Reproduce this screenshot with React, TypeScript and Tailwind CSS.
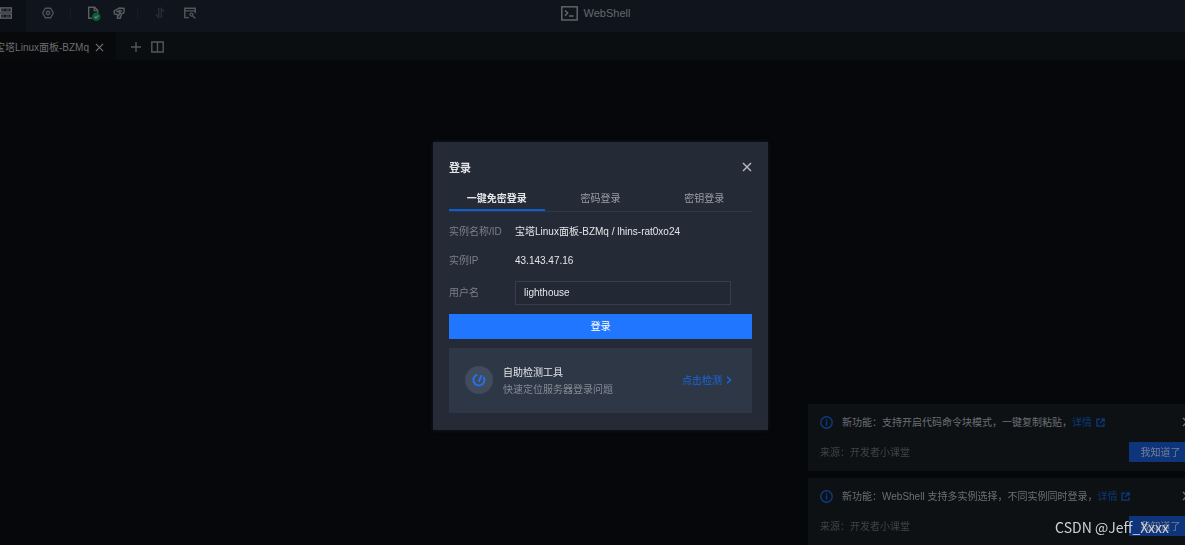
import React, { ReactNode, useState } from "react";

const stroke = { fill: "none", stroke: "currentColor", strokeWidth: 1.4 };

function CloseIcon({ className }: { className: string }) {
  return (
    <svg viewBox="0 0 10 10" className={className} {...stroke}>
      <path d="M1 1l8 8M9 1L1 9" />
    </svg>
  );
}

function ServerIcon() {
  return (
    <svg viewBox="0 0 12 12" className="size-3 text-[#606267]" {...stroke}>
      <rect x="0.7" y="0.9" width="10.6" height="4.1" />
      <rect x="0.7" y="7" width="10.6" height="4.1" />
      <path d="M2.3 2.95h2M5.8 2.95h3.6M2.3 9.05h2M5.8 9.05h3.6" strokeWidth="0.9" />
    </svg>
  );
}

function SettingsIcon() {
  return (
    <svg viewBox="0 0 12 12" className="size-3 text-[#4e5156]" {...stroke}>
      <path d="M3.4 1.2h5.2L11.4 6l-2.8 4.8H3.4L.6 6z" />
      <circle cx="6" cy="6" r="1.7" />
    </svg>
  );
}

function FileCheckIcon() {
  return (
    <svg viewBox="0 0 14 15" className="h-[15px] w-3.5 text-[#5b5d62]" {...stroke}>
      <path d="M5 12.3H1.7V1.2h6l3 3V7M7.2 1.2v3.4h3.5" />
      <circle cx="9.3" cy="10.7" r="4.2" fill="#075c39" stroke="none" />
      <path d="M7.5 10.6l1.4 1.4 2.3-2.5" stroke="#7c8f86" strokeWidth="1.1" />
    </svg>
  );
}

function RocketIcon() {
  return (
    <svg viewBox="0 0 12 12" className="size-3 text-[#5a5c61]" {...stroke}>
      <path d="M1 4.2L6.3 1l4.9.5-.4 4.3-2.4 1.4-1.2 4L4.3 11l.6-3.2L1.5 7z" />
      <path d="M3.4 5.2l3.6-1.9 2 1.2M5.6 9.4l1-4.2 1.6 1.6" />
    </svg>
  );
}

function TransferIcon() {
  return (
    <svg viewBox="0 0 12 12" className="size-3 text-[#292d33]" {...stroke}>
      <path d="M4.7 1v9.4L1.6 7.2M7.3 11V1.6l3.1 3.2" />
    </svg>
  );
}

function WindowSearchIcon() {
  return (
    <svg viewBox="0 0 12 12" className="size-3 text-[#54565b]" {...stroke}>
      <path d="M5 10.6H.8V1.2h10.4v5M.8 3.9h10.4" />
      <circle cx="7.4" cy="7.6" r="1.5" strokeWidth="1.2" />
      <path d="M8.5 8.7l2.9 2.7" />
    </svg>
  );
}

function TerminalIcon() {
  return (
    <svg viewBox="0 0 17 15" className="h-[15px] w-[17px]" {...stroke}>
      <rect x="0.8" y="0.8" width="15.4" height="13.2" />
      <path d="M4 4.5l2.7 2.6L4 9.7M8 10h4.5" />
    </svg>
  );
}

function InfoIcon() {
  return (
    <svg viewBox="0 0 13 13" className="size-[13px] shrink-0 text-[#0e3c84]" {...stroke}>
      <circle cx="6.5" cy="6.5" r="5.7" />
      <path d="M6.5 5.6v4M6.5 3.2v1.5" />
    </svg>
  );
}

function ExternalIcon() {
  return (
    <svg viewBox="0 0 9 9" className="size-[9px]" {...stroke}>
      <path d="M4 1.2H1v6.9h6.9V5.2M5.3.9h2.9v2.9M8 1L4 5" />
    </svg>
  );
}

function ToolButton({ label, children }: { label: string; children: ReactNode }) {
  return (
    <button type="button" aria-label={label} className="flex items-center justify-center">
      {children}
    </button>
  );
}

function Toolbar() {
  return (
    <header className="grid h-8 grid-cols-[1fr_auto_1fr] bg-[#10141d]">
      <div className="flex items-center">
        <div className="flex h-full w-[26px] items-center bg-[#0c0f16] pb-1.5">
          <ToolButton label="服务器"><ServerIcon /></ToolButton>
        </div>
        <div className="flex items-center pb-1.5 pl-4">
          <ToolButton label="设置"><SettingsIcon /></ToolButton>
          <span className="mx-4 h-3 w-px bg-[#171b22]" />
          <ToolButton label="文件"><FileCheckIcon /></ToolButton>
          <span className="w-3" />
          <ToolButton label="命令"><RocketIcon /></ToolButton>
          <span className="ml-3 mr-4 h-3 w-px bg-[#171b22]" />
          <ToolButton label="传输"><TransferIcon /></ToolButton>
          <span className="w-[18px]" />
          <ToolButton label="查找"><WindowSearchIcon /></ToolButton>
        </div>
      </div>
      <div className="flex items-center gap-1.5 pb-1.5 pl-1.5 text-[11px] text-[#66686d]">
        <TerminalIcon />
        <span>WebShell</span>
      </div>
      <div />
    </header>
  );
}

function TabBar() {
  return (
    <nav className="flex h-7 items-center bg-[#0a0e11] text-[#54565b]">
      <div className="flex h-full w-[116px] items-center justify-end gap-1.5 overflow-hidden bg-[#07090b] pr-3 pt-0.5 text-[10px] text-[#6c6e71]">
        <span className="whitespace-nowrap">宝塔Linux面板-BZMq</span>
        <button type="button" aria-label="关闭标签">
          <CloseIcon className="size-[9px]" />
        </button>
      </div>
      <button type="button" aria-label="新建标签" className="ml-[15px] pt-0.5">
        <svg viewBox="0 0 10 10" className="size-2.5" {...stroke}>
          <path d="M5 0v10M0 5h10" />
        </svg>
      </button>
      <button type="button" aria-label="分屏" className="ml-2.5 pt-0.5">
        <svg viewBox="0 0 13 12" className="h-3 w-[13px]" {...stroke}>
          <path d="M.8 1h11.4v10H.8zM6.5 1v10" />
        </svg>
      </button>
    </nav>
  );
}

const tabs = ["一键免密登录", "密码登录", "密钥登录"];

function LoginDialog() {
  const [active, setActive] = useState(0);
  const [user, setUser] = useState("lighthouse");
  return (
    <div className="fixed inset-0 flex items-center justify-center pl-4 pt-[26px]">
      <section
        role="dialog"
        aria-labelledby="login-title"
        className="w-[335px] bg-[#242a36] px-4 pb-[17px] pt-4 text-[10px] text-[#e4e6ea] shadow-[0_0_4px_#151922]"
      >
        <div className="flex items-start justify-between">
          <h1 id="login-title" className="text-[11px] leading-[21px] font-bold">登录</h1>
          <button type="button" aria-label="关闭" className="pt-1 text-[#b9bcc2]">
            <CloseIcon className="size-2.5" />
          </button>
        </div>

        <div role="tablist" className="mt-[7px] grid h-[26px] grid-cols-3 gap-2 border-b border-[#303744]">
          {tabs.map((tab, i) => (
            <button
              key={tab}
              type="button"
              role="tab"
              aria-selected={i === active}
              onClick={() => setActive(i)}
              className={
                i === active
                  ? "border-b-2 border-[#0d5fd0] pt-0.5 font-bold text-[#e4e6ea]"
                  : "border-b-2 border-transparent pt-0.5 text-[#9a9ea6]"
              }
            >
              {tab}
            </button>
          ))}
        </div>

        <form onSubmit={(e) => e.preventDefault()}>
          <dl className="mt-2.5 grid grid-cols-[66px_1fr] gap-y-[9px] leading-5">
            <dt className="text-[#7a7f89]">实例名称/ID</dt>
            <dd className="whitespace-nowrap">宝塔Linux面板-BZMq / lhins-rat0xo24</dd>
            <dt className="text-[#7a7f89]">实例IP</dt>
            <dd>43.143.47.16</dd>
          </dl>
          <div className="mt-2.5 grid grid-cols-[66px_1fr] items-center pr-[21px]">
            <label htmlFor="username" className="text-[#7a7f89]">用户名</label>
            <input
              id="username"
              value={user}
              onChange={(e) => setUser(e.target.value)}
              className="h-6 w-full min-w-0 border border-[#363d4b] bg-[#222834] px-2 outline-none"
            />
          </div>
          <button type="submit" className="mt-[9px] h-[25px] w-full bg-[#2176ff] text-white">
            登录
          </button>
        </form>

        <div className="mt-[9px] flex h-[65px] items-center bg-[#2e3745] pl-4 pr-5">
          <span className="flex size-7 shrink-0 items-center justify-center rounded-full bg-[#404b5c] text-[#2472ee]">
            <svg viewBox="0 0 14 14" className="size-3.5" {...stroke} strokeWidth="1.9">
              <path d="M5.2 1.7a5.5 5.5 0 1 0 6.3 2.2M7 8.2L9.6 2.2" />
              <circle cx="7" cy="8" r="1.1" fill="currentColor" stroke="none" />
            </svg>
          </span>
          <div className="ml-2.5 flex-1 pt-px leading-[17px]">
            <h2>自助检测工具</h2>
            <p className="text-[#848a94]">快速定位服务器登录问题</p>
          </div>
          <a href="#check" className="flex items-center gap-1 text-[#1767e2]">
            点击检测
            <svg viewBox="0 0 6 8" className="h-2 w-1.5" {...stroke}>
              <path d="M1 .8L4.5 4 1 7.2" />
            </svg>
          </a>
        </div>
      </section>
    </div>
  );
}

function Notice({ text, source }: { text: string; source: string }) {
  return (
    <article className="h-[67px] bg-[#0d1114] pl-3 pr-[9px] pt-2.5 text-[10px] text-[#6c6f73]">
      <div className="flex h-4 items-center">
        <InfoIcon />
        <p className="ml-[9px] whitespace-nowrap">{text}</p>
        <a href="#details" className="flex shrink-0 items-center gap-1 text-[#0b3a7a]">
          详情
          <ExternalIcon />
        </a>
        <button type="button" aria-label="关闭通知" className="ml-auto shrink-0">
          <CloseIcon className="size-2.5" />
        </button>
      </div>
      <div className="mt-3 flex h-5 items-center justify-between">
        <span className="text-[#404448]">{source}</span>
        <button type="button" className="h-5 w-[63px] bg-[#0e357b] text-[#747f96]">
          我知道了
        </button>
      </div>
    </article>
  );
}

export default function App() {
  return (
    <div className="flex min-h-screen flex-col overflow-hidden bg-[#06070b] font-['Liberation_Sans','Noto_Sans_CJK_SC',sans-serif]">
      <Toolbar />
      <TabBar />
      <main className="flex-1" />
      <aside className="fixed -right-4 bottom-0 flex w-[393px] flex-col gap-[7px]">
        <Notice text="新功能：支持开启代码命令块模式，一键复制粘贴，" source="来源：开发者小课堂" />
        <Notice text="新功能：WebShell 支持多实例选择，不同实例同时登录，" source="来源：开发者小课堂" />
      </aside>
      <LoginDialog />
      <div className="pointer-events-none fixed bottom-2 right-4 font-['Noto_Sans_CJK_SC',sans-serif] text-[14px] leading-5 text-[#d0d1d3]">
        CSDN @Jeff_Xxxx
      </div>
    </div>
  );
}
